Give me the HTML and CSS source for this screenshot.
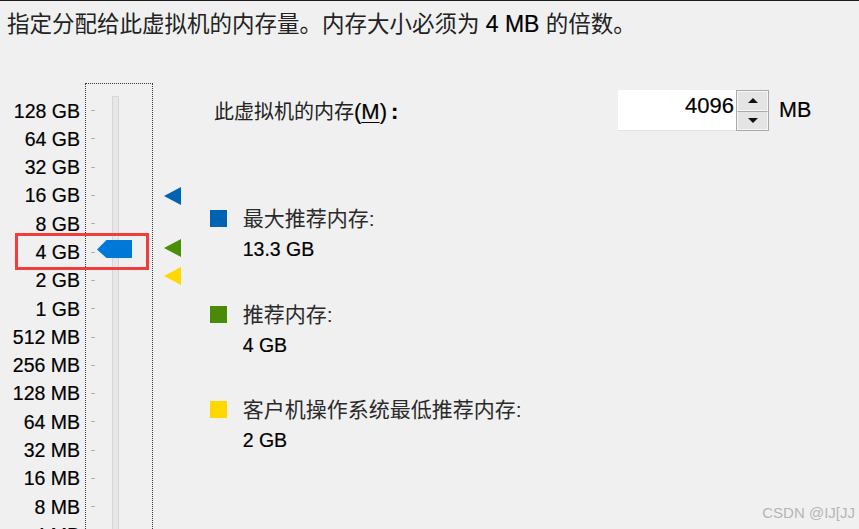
FILE: index.html
```html
<!DOCTYPE html>
<html lang="zh-CN">
<head>
<meta charset="utf-8">
<title>内存大小</title>
<link rel="stylesheet" href="styles.css">
</head>
<body>
<div class="topline"></div>
<header class="intro">指定分配给此虚拟机的内存量。内存大小必须为 <span class="latin">4 MB</span> 的倍数。</header>
<main class="content">
  <div class="scale">
    <div class="labels">
      <div class="lbl">128 GB</div>
      <div class="lbl">64 GB</div>
      <div class="lbl">32 GB</div>
      <div class="lbl">16 GB</div>
      <div class="lbl">8 GB</div>
      <div class="lbl">4 GB</div>
      <div class="lbl">2 GB</div>
      <div class="lbl">1 GB</div>
      <div class="lbl">512 MB</div>
      <div class="lbl">256 MB</div>
      <div class="lbl">128 MB</div>
      <div class="lbl">64 MB</div>
      <div class="lbl">32 MB</div>
      <div class="lbl">16 MB</div>
      <div class="lbl">8 MB</div>
      <div class="lbl">4 MB</div>
    </div>
    <div class="slider">
      <div class="ticks">
        <div class="tick"><i></i></div><div class="tick"><i></i></div><div class="tick"><i></i></div><div class="tick"><i></i></div>
        <div class="tick"><i></i></div><div class="tick"><i></i></div><div class="tick"><i></i></div><div class="tick"><i></i></div>
        <div class="tick"><i></i></div><div class="tick"><i></i></div><div class="tick"><i></i></div><div class="tick"><i></i></div>
        <div class="tick"><i></i></div><div class="tick"><i></i></div><div class="tick"><i></i></div><div class="tick"><i></i></div>
      </div>
      <div class="track"></div>
      <svg class="thumb" width="35" height="18" viewBox="0 0 35 18"><polygon points="0,9.5 9.5,0 35,0 35,18 9.5,18" fill="#0078d7"/></svg>
    </div>
    <div class="highlight"></div>
  </div>
  <div class="markers">
    <svg class="mk" style="top:104px" width="17" height="18" viewBox="0 0 17 18"><polygon points="0,9 17,0 17,18" fill="#0063b1"/></svg>
    <svg class="mk" style="top:156px" width="17" height="18" viewBox="0 0 17 18"><polygon points="0,9 17,0 17,18" fill="#4a8f07"/></svg>
    <svg class="mk" style="top:184px" width="17" height="18" viewBox="0 0 17 18"><polygon points="0,9 17,0 17,18" fill="#ffd800"/></svg>
  </div>
  <div class="panel">
    <div class="mem-row">
      <label class="mem-label">此虚拟机的内存<span class="mnemo">(<u>M</u>)<span class="colon">:</span></span></label>
      <div class="spin">
        <div class="spin-input">4096</div>
        <div class="spin-btns">
          <div class="spin-btn"><svg width="10" height="5" viewBox="0 0 10 5"><polygon points="0,5 5,0 10,5" fill="#111"/></svg></div>
          <div class="spin-btn"><svg width="10" height="5" viewBox="0 0 10 5"><polygon points="0,0 10,0 5,5" fill="#111"/></svg></div>
        </div>
      </div>
      <span class="unit">MB</span>
    </div>
    <div class="legend">
      <div class="item">
        <span class="sw sw-blue"></span>
        <div class="item-text"><div class="ttl">最大推荐内存:</div><div class="val">13.3 GB</div></div>
      </div>
      <div class="item">
        <span class="sw sw-green"></span>
        <div class="item-text"><div class="ttl">推荐内存:</div><div class="val">4 GB</div></div>
      </div>
      <div class="item">
        <span class="sw sw-yellow"></span>
        <div class="item-text"><div class="ttl">客户机操作系统最低推荐内存:</div><div class="val">2 GB</div></div>
      </div>
    </div>
  </div>
</main>
<div class="watermark">CSDN @IJ[JJ</div>
</body>
</html>
```
FILE: styles.css
```css
html, body {
  margin: 0;
  padding: 0;
}
body {
  width: 859px;
  height: 529px;
  overflow: hidden;
  background: #f0f0f0;
  color: #000;
  font-family: "Liberation Sans", "Noto Sans CJK SC", sans-serif;
  position: relative;
}
.topline {
  height: 1px;
  background: #1c1c1c;
}
.intro {
  height: 82px;
  box-sizing: border-box;
  padding: 10px 0 0 7px;
  font-size: 22.5px;
  line-height: 26px;
  color: #222;
  white-space: nowrap;
}
.intro .latin {
  font-size: 23px;
  color: #000;
  -webkit-text-stroke: 0.2px #000;
}
.content {
  display: flex;
  height: 446px;
  overflow: hidden;
}
.scale {
  position: relative;
  display: flex;
  flex: none;
}
.labels {
  width: 80px;
  padding-top: 13.5px;
}
.lbl {
  height: 28.3px;
  line-height: 28.3px;
  text-align: right;
  font-size: 19.5px;
  white-space: nowrap;
  -webkit-text-stroke: 0.2px #000;
}
.slider {
  position: relative;
  margin-left: 5px;
  width: 68px;
  height: 460px;
  box-sizing: border-box;
  border: 1px dotted #3a3a3a;
  border-bottom: none;
  display: flex;
}
.ticks {
  padding: 12.5px 0 0 5px;
  width: 4px;
}
.tick {
  height: 28.3px;
  display: flex;
  align-items: center;
}
.tick i {
  display: block;
  width: 4px;
  height: 1px;
  background: #b0b0b0;
}
.track {
  margin: 12px 0 0 17px;
  width: 5px;
  height: 500px;
  background: #e7e7e7;
  border: 1px solid #d6d6d6;
}
.thumb {
  position: absolute;
  left: 11px;
  top: 156px;
  display: block;
}
.highlight {
  position: absolute;
  left: 15px;
  top: 150px;
  width: 134px;
  height: 37px;
  box-sizing: border-box;
  border: 3px solid #f23d3d;
}
.markers {
  position: relative;
  flex: none;
  width: 18px;
  margin-left: 10px;
}
.mk {
  position: absolute;
  left: 1px;
  display: block;
}
.panel {
  flex: none;
  margin-left: 29px;
  width: 650px;
}
.mem-row {
  display: flex;
  align-items: center;
  margin-top: 7px;
  height: 41px;
}
.mem-label {
  width: 404px;
  margin-left: 4px;
  font-size: 20px;
  color: #222;
  white-space: nowrap;
}
.mnemo {
  font-size: 22px;
  color: #000;
  -webkit-text-stroke: 0.2px #000;
}
.mnemo .colon {
  margin-left: 4px;
  font-weight: bold;
}
.mem-label u {
  text-decoration-thickness: 1px;
  text-underline-offset: 3px;
}
.spin {
  display: flex;
  height: 41px;
}
.spin-input {
  width: 118px;
  height: 41px;
  box-sizing: border-box;
  background: #fff;
  border-bottom: 1px solid #e2e2e2;
  text-align: right;
  padding: 3px 2px 0 0;
  font-size: 22px;
  line-height: 25px;
  -webkit-text-stroke: 0.2px #000;
}
.spin-btns {
  width: 33px;
  height: 41px;
  box-sizing: border-box;
  border: 1px solid #a9a9a9;
  display: flex;
  flex-direction: column;
}
.spin-btn {
  flex: 1;
  display: flex;
  align-items: center;
  justify-content: center;
  background: #e4e4e4;
  border: 1px solid #f7f7f7;
}
.spin-btn + .spin-btn {
  border-top: 1px solid #a9a9a9;
}
.spin-btn svg {
  display: block;
}
.unit {
  margin-left: 10px;
  font-size: 21.5px;
  -webkit-text-stroke: 0.2px #000;
}
.legend {
  margin-top: 73.3px;
  display: flex;
  flex-direction: column;
  gap: 35.5px;
}
.item {
  display: flex;
  align-items: flex-start;
}
.sw {
  flex: none;
  width: 17px;
  height: 17px;
  margin-top: 6px;
  margin-right: 15.7px;
}
.sw-blue { background: #0063b1; }
.sw-green { background: #498b06; }
.sw-yellow { background: #ffd800; }
.ttl {
  font-size: 21px;
  line-height: 30px;
  color: #2a2a2a;
  white-space: nowrap;
}
.val {
  font-size: 19.5px;
  line-height: 30px;
  white-space: nowrap;
  -webkit-text-stroke: 0.2px #000;
}
.watermark {
  position: absolute;
  right: 4px;
  top: 504px;
  font-size: 15px;
  line-height: 17px;
  color: #b6b6b6;
  white-space: nowrap;
}
```
